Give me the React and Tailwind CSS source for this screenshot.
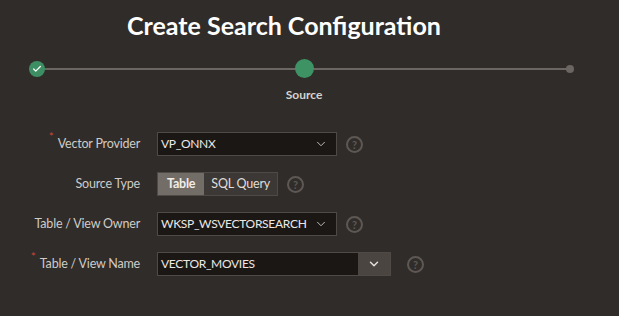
import { ChevronDown, Check } from "lucide-react";

const Help = () => (
  <span className="flex h-[17px] w-[17px] items-center justify-center rounded-full border-2 border-[#5d5853] text-[11px] font-bold leading-none text-[#5d5853]">
    ?
  </span>
);

const Row = ({ label, required, children }) => (
  <div className="flex h-[40px] items-center">
    <div className="flex w-[141px] justify-end pr-[1px] text-[12.5px] tracking-[-0.2px] text-[#cfcbc7]">
      <span className="relative">
        {required && (
          <span className="absolute -left-[9px] -top-[7px] text-[12px] text-[#c74634]">*</span>
        )}
        {label}
      </span>
    </div>
    <div className="ml-[16px] flex items-center gap-[9px]">{children}</div>
  </div>
);

const Select = ({ value, width }) => (
  <div className={`flex h-[24px] items-center justify-between border border-[#4f4a46] bg-[#1b1715] pl-[3px] pr-[8px] text-[12px] tracking-[-0.3px] text-[#ece8e4] ${width}`}>
    <span>{value}</span>
    <ChevronDown className="h-[14px] w-[14px] text-[#d4d0cc]" strokeWidth={1.5} />
  </div>
);

export default function App() {
  return (
    <div className="h-[316px] w-[619px] overflow-hidden bg-[#302c29] font-['Lato',sans-serif]">
      <h1 className="pl-[127px] pt-[8px] text-[25px] font-bold leading-[34px] text-white">
        Create Search Configuration
      </h1>

      {/* stepper */}
      <div className="relative mx-[29px] mt-[17px] h-[20px]">
        <div className="absolute left-[8px] right-[20px] top-[9px] h-[2px] bg-[#6b6661]" />
        <div className="absolute left-0 top-[2px] flex h-[16px] w-[16px] items-center justify-center rounded-full bg-[#3d8f63]">
          <Check className="h-[10px] w-[10px] text-white" strokeWidth={3} />
        </div>
        <div className="absolute left-[266px] top-0 h-[19px] w-[19px] rounded-full bg-[#3d9364]" />
        <div className="absolute right-[16px] top-[6px] h-[8px] w-[8px] rounded-full bg-[#6b6661]" />
      </div>
      <div className="mt-[7px] w-[608px] text-center text-[12px] font-bold text-[#d6d2ce]">Source</div>

      <div className="mt-[20px] flex flex-col">
        <Row label="Vector Provider" required>
          <Select value="VP_ONNX" width="w-[180px]" />
          <Help />
        </Row>
        <Row label="Source Type">
          <div className="flex h-[24px] border border-[#4f4a46] text-[12.5px] tracking-[-0.2px]">
            <span className="flex items-center bg-[#736d68] px-[9px] font-bold text-[#f2eeea]">Table</span>
            <span className="flex items-center bg-[#3c3835] px-[7px] text-[#e0dcd8]">SQL Query</span>
          </div>
          <Help />
        </Row>
        <Row label="Table / View Owner">
          <Select value="WKSP_WSVECTORSEARCH" width="w-[180px]" />
          <Help />
        </Row>
        <Row label="Table / View Name" required>
          <div className="flex h-[24px] border border-[#4f4a46] text-[12px] tracking-[-0.3px]">
            <span className="flex w-[200px] items-center bg-[#1b1715] pl-[3px] text-[#ece8e4]">VECTOR_MOVIES</span>
            <span className="flex w-[32px] items-center justify-center bg-[#4a4541]">
              <ChevronDown className="h-[14px] w-[14px] text-[#e4e0dc]" strokeWidth={2.5} />
            </span>
          </div>
          <span className="ml-[7px]">
            <Help />
          </span>
        </Row>
      </div>
    </div>
  );
}
